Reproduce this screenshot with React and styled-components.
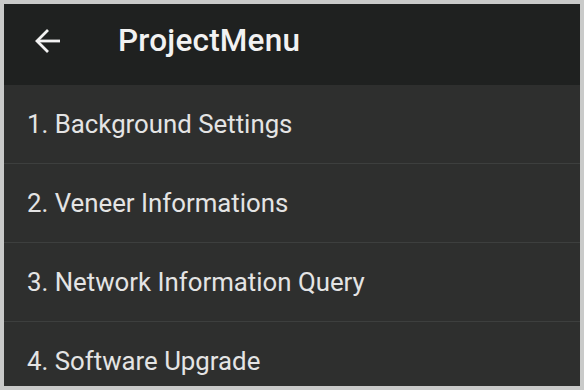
import React from 'react'
import styled, { createGlobalStyle } from 'styled-components'

const GlobalStyle = createGlobalStyle`
    html, body {
        margin: 0;
        padding: 0;
        background: #c9cac9;
    }
    body {
        font-family: Roboto, "Noto Sans", sans-serif;
    }
`

const Frame = styled.div`
    width: 584px;
    height: 390px;
    box-sizing: border-box;
    padding: 4px;
    background: #c9cac9;
    overflow: hidden;
`

const Screen = styled.div`
    height: 100%;
    display: flex;
    flex-direction: column;
    background: #2e2f2e;
    overflow: hidden;
`

const TopBar = styled.div`
    height: 81px;
    box-sizing: border-box;
    flex-shrink: 0;
    display: flex;
    align-items: center;
    background: #1f2120;
    padding: 0 0 8px 29px;
    gap: 57px;
`

const BackButton = styled.div`
    width: 28px;
    height: 28px;
    display: flex;
    align-items: center;
    justify-content: center;
    color: #f2f2f2;
`

const Title = styled.h1`
    margin: 0;
    font-size: 31.5px;
    font-weight: 500;
    color: #f2f2f2;
    letter-spacing: 0.2px;
`

const MenuList = styled.ul`
    list-style: none;
    margin: 0;
    padding: 0;
`

const MenuItem = styled.li`
    height: 78px;
    display: flex;
    align-items: center;
    padding-left: 23px;
    font-size: 25.8px;
    color: #e4e4e4;
    border-bottom: 1px solid #3d3f3e;
`

const items = [
    '1. Background Settings',
    '2. Veneer Informations',
    '3. Network Information Query',
    '4. Software Upgrade',
]

const ArrowLeft = () => (
    <svg width="28" height="28" viewBox="0 0 28 28" fill="none" stroke="currentColor" strokeWidth="2.8" strokeLinecap="butt" strokeLinejoin="miter">
        <path d="M27 14H4" />
        <path d="M15 3L4 14l11 11" />
    </svg>
)

const App = () => {
    return (
        <Frame>
            <GlobalStyle />
            <Screen>
                <TopBar>
                    <BackButton><ArrowLeft /></BackButton>
                    <Title>ProjectMenu</Title>
                </TopBar>
                <MenuList>
                    {items.map(label => (
                        <MenuItem key={label}>{label}</MenuItem>
                    ))}
                </MenuList>
            </Screen>
        </Frame>
    )
}

export default App
